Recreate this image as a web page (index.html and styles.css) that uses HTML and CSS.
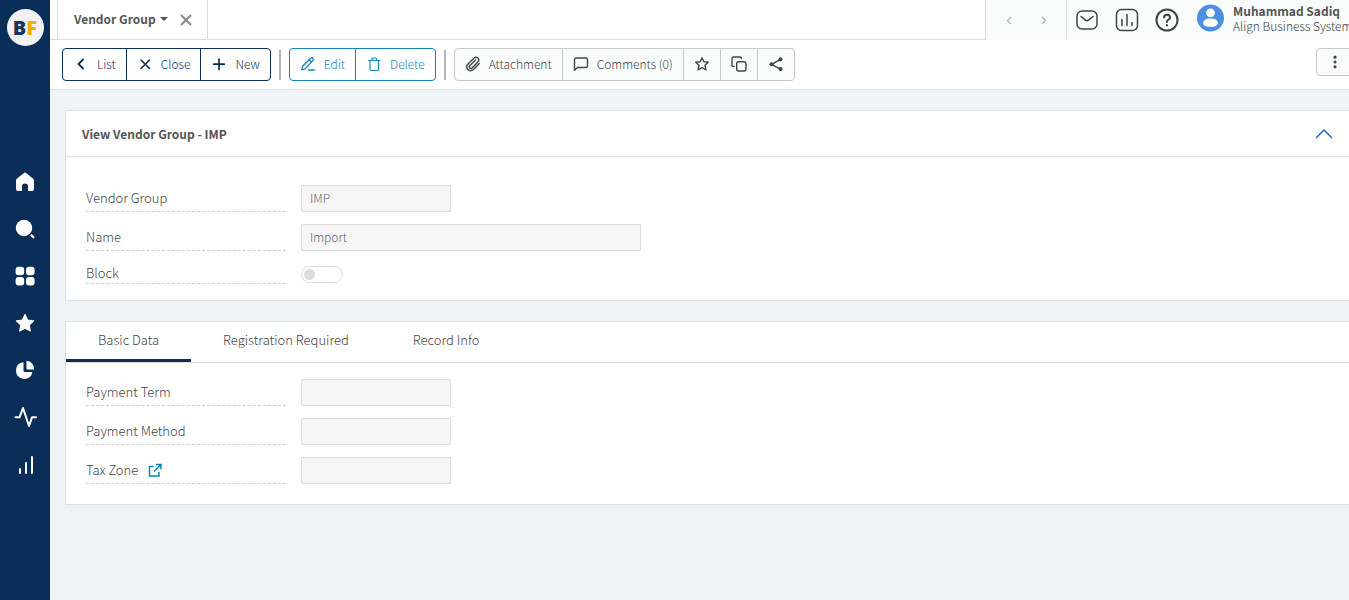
FILE: index.html
```html
<!DOCTYPE html>
<html lang="en">
<head>
<meta charset="utf-8">
<title>Vendor Group - IMP</title>
<link rel="stylesheet" href="styles.css">
</head>
<body>
<div class="app">
  <aside class="sidebar">
    <a class="logo" href="#" aria-label="Home page"><span class="logo-b">B</span><span class="logo-f">F</span></a>
    <nav class="side-nav" aria-label="Main">
      <a href="#" aria-label="Home"><svg viewBox="0 0 20 20"><path fill="currentColor" d="M9 1 2 6.400Q1 7.200 1 8.500V17q0 2 2 2h4v-5q0-2.500 3-2.500t3 2.500v5h4q2 0 2-2V8.500q0-1.300-1-2.100L11 1q-1-.8-2 0Z"/></svg></a>
      <a href="#" aria-label="Search"><svg viewBox="0 0 20 20"><circle cx="9" cy="9" r="8.200" fill="currentColor"/><path d="m16.500 16.500 1.800 1.700" stroke="currentColor" stroke-width="2.400" stroke-linecap="round"/></svg></a>
      <a href="#" aria-label="Apps"><svg viewBox="0 0 20 20" fill="currentColor"><rect x=".6" y=".8" width="8.600" height="8.400" rx="3"/><rect x="11" y=".8" width="8.600" height="8.400" rx="3"/><rect x=".6" y="11" width="8.600" height="8.400" rx="3"/><rect x="11" y="11" width="8.600" height="8.400" rx="3"/></svg></a>
      <a href="#" aria-label="Favourites"><svg viewBox="0 0 20 20"><path d="m10 1.500 2.600 5.500 6 .8-4.400 4.200 1.100 6L10 15.100 4.700 18l1.100-6L1.400 7.800l6-.8Z" fill="currentColor" stroke="currentColor" stroke-width="1.200" stroke-linejoin="round"/></svg></a>
      <a href="#" aria-label="Reports"><svg viewBox="0 0 20 20" fill="currentColor"><path d="M8.500 2.300Q1 3 1 10.500T9 19q7.500-.3 8.300-7H10q-1.500 0-1.500-1.500Z"/><path d="M11.500.8q7 .6 7.700 8.700h-6.500q-1.200 0-1.200-1.200Z"/></svg></a>
      <a href="#" aria-label="Activity"><svg viewBox="0 0 20 20"><path d="M.5 10.300h4L8 1l6 18 3-8.700h4" fill="none" stroke="currentColor" stroke-width="2" stroke-linejoin="round" stroke-linecap="round"/></svg></a>
      <a href="#" aria-label="Statistics"><svg viewBox="0 0 20 20"><path d="M5 19v-4M11 19V9M17 19V3" stroke="currentColor" stroke-width="2" stroke-linecap="round"/></svg></a>
    </nav>
  </aside>

  <div class="main">
    <header class="topbar">
      <div class="tab-strip">
        <div class="doc-tab">
          <button class="doc-name" type="button">Vendor Group <span class="caret"></span></button>
          <button class="doc-close" type="button" aria-label="Close tab"><svg viewBox="0 0 12 12"><path d="m1 1 10 10M11 1 1 11" stroke="currentColor" stroke-width="2"/></svg></button>
        </div>
      </div>
      <div class="pager">
        <button type="button" aria-label="Previous"><svg viewBox="0 0 10 10"><path d="M7 2 3.500 5.500 7 9" fill="none" stroke="currentColor" stroke-width="1.500"/></svg></button>
        <button type="button" aria-label="Next"><svg viewBox="0 0 10 10"><path d="M3 2 6.500 5.500 3 9" fill="none" stroke="currentColor" stroke-width="1.500"/></svg></button>
      </div>
      <div class="utilities">
        <button type="button" aria-label="Messages"><svg viewBox="0 0 24 24"><rect x="2" y="3" width="20" height="18" rx="5"/><path d="m6 8.500 4.500 3.700q1.500 1.200 3 0L18 8.500"/></svg></button>
        <button type="button" aria-label="Dashboard"><svg viewBox="0 0 24 24"><rect x="1.500" y="1.500" width="21" height="21" rx="5"/><path d="M7 17.500v-6M12 17.500v-11M17 17.500v-3"/></svg></button>
        <button type="button" aria-label="Help"><svg viewBox="0 0 24 24" class="help"><circle cx="12" cy="12" r="10.500"/><path d="M9 9.500Q9 6.700 12 6.700t3 2.700q0 1.500-1.500 2.300Q12 12.500 12 14M12 17v.500"/></svg></button>
      </div>
      <a class="account" href="#">
        <svg class="avatar" viewBox="0 0 26 26"><circle cx="13" cy="13" r="13" fill="#4d90e2"/><circle cx="13" cy="8" r="4.200" fill="#fff"/><path fill="#fff" d="M6 18q0-4.500 7-4.500t7 4.500q0 3.500-7 3.500T6 18Z"/></svg>
        <span class="account-text"><strong>Muhammad Sadiq</strong><span>Align Business System</span></span>
      </a>
    </header>

    <div class="toolbar">
      <div class="group group-navy">
        <button type="button"><svg viewBox="0 0 16 16"><path d="M10 3.500 5.500 8l4.500 4.500" stroke-width="1.800"/></svg>List</button>
        <button type="button"><svg viewBox="0 0 16 16"><path d="m4 4 8.500 8.500M12.500 4 4 12.500" stroke-width="1.600"/></svg>Close</button>
        <button type="button"><svg viewBox="0 0 16 16"><path d="M8 3v10.500M2.700 8.200h10.600" stroke-width="1.700"/></svg>New</button>
      </div>
      <span class="divider"></span>
      <div class="group group-blue">
        <button type="button"><svg viewBox="0 0 16 16"><path d="m1.800 14 .9-3.700L10.500 2.200q1.200-1 2.300 0t0 2.300L5.200 12.900ZM9.200 3.700l2.200 2.200M8.500 14h6" stroke-width="1.300"/></svg>Edit</button>
        <button type="button"><svg viewBox="0 0 16 16"><path d="M2.500 4.500h11.500M4 4.500V13q0 1.500 1.500 1.500H11q1.500 0 1.500-1.500V4.500M6 4.500V3q0-1 1-1h2.500q1 0 1 1v1.500" stroke-width="1.200"/></svg>Delete</button>
      </div>
      <span class="divider"></span>
      <div class="group group-grey">
        <button type="button"><svg viewBox="0 0 16 16"><path d="m14.300 7.500-6 6Q5.500 16 2.800 13.600.4 11 2.800 8.200L9 2q2-1.700 4 .1 1.700 1.900 0 3.700l-6 6.100q-1.100 1-2.200 0-1-1 0-2.200l5.600-5.600" stroke-width="1.400"/></svg>Attachment</button>
        <button type="button"><svg viewBox="0 0 16 16"><path d="M1.500 14.300V3.500Q1.500 2 3 2h10q1.500 0 1.500 1.500V10q0 1.500-1.500 1.500H4.500Z" stroke-width="1.400"/></svg>Comments (0)</button>
        <button type="button" class="icon-only" aria-label="Favourite"><svg viewBox="0 0 16 16"><path d="m8 1.800 1.800 4 4.500.5L11 9.300l1 4.500-4-2.300-4 2.300 1-4.500-3.300-3 4.500-.5Z" stroke-width="1.400"/></svg></button>
        <button type="button" class="icon-only" aria-label="Copy"><svg viewBox="0 0 16 16"><rect x="5.700" y="5.700" width="9.300" height="9.300" rx="2" stroke-width="1.400"/><path d="M3 10.500H2.500Q1 10.500 1 9V2.500Q1 1 2.500 1H9q1.500 0 1.500 1.500" stroke-width="1.400"/></svg></button>
        <button type="button" class="icon-only" aria-label="Share"><svg viewBox="0 0 16 16"><path d="M12.500 3.300 3.500 8.300l9 4.800" stroke-width="1.400"/><g fill="currentColor" stroke="none"><circle cx="12.500" cy="3.300" r="2"/><circle cx="3.500" cy="8.300" r="2"/><circle cx="12.500" cy="13.100" r="2"/></g></svg></button>
      </div>
      <button class="more" type="button" aria-label="More"><svg viewBox="0 0 16 16" fill="currentColor"><circle cx="8" cy="2.500" r="1.800"/><circle cx="8" cy="8" r="1.800"/><circle cx="8" cy="13.500" r="1.800"/></svg></button>
    </div>

    <main class="content">
      <section class="panel">
        <div class="panel-head">
          <h1>View Vendor Group - IMP</h1>
          <button type="button" aria-label="Collapse"><svg viewBox="0 0 16 10"><path d="m0 9 8-8 8 8" fill="none" stroke="currentColor" stroke-width="1.400"/></svg></button>
        </div>
        <form class="fields fields-main">
          <div class="row"><label for="group">Vendor Group</label><input class="text short" id="group" value="IMP" disabled></div>
          <div class="row"><label for="name">Name</label><input class="text long" id="name" value="Import" disabled></div>
          <div class="row row-switch"><label for="block">Block</label><input class="switch" id="block" type="checkbox" disabled></div>
        </form>
      </section>

      <section class="panel">
        <div class="tabs" role="tablist">
          <button type="button" role="tab" aria-selected="true" class="active">Basic Data</button>
          <button type="button" role="tab">Registration Required</button>
          <button type="button" role="tab">Record Info</button>
        </div>
        <form class="fields fields-tab">
          <div class="row"><label for="term">Payment Term</label><input class="text short" id="term" disabled></div>
          <div class="row"><label for="method">Payment Method</label><input class="text short" id="method" disabled></div>
          <div class="row"><label for="zone">Tax Zone <svg class="link-icon" viewBox="0 0 14 14"><path d="M5.500 3.500H1.500v9.500h9.500V9M8 1.500h5v5M13 1.500 6 8.500" fill="none" stroke="currentColor" stroke-width="1.400"/></svg></label><input class="text short" id="zone" disabled></div>
        </form>
      </section>
    </main>
  </div>
</div>
</body>
</html>
```
FILE: styles.css
```css
* { box-sizing: border-box; }

body {
  margin: 0;
  overflow: hidden;
  background: #eef3f7;
  color: #444;
  font: 300 13px/20px "Noto Sans CJK SC", "Noto Sans", sans-serif;
}

button {
  margin: 0;
  padding: 0;
  border: 0;
  background: none;
  color: inherit;
  font: inherit;
}

a { color: inherit; text-decoration: none; }
svg { display: block; flex: none; }

.app { display: flex; min-height: 100vh; }

/* Sidebar */
.sidebar {
  flex: none;
  width: 50px;
  padding-top: 9px;
  background: #0b2e59;
  color: #fff;
}
.logo {
  display: flex;
  align-items: center;
  justify-content: center;
  width: 37px;
  height: 37px;
  margin: 0 auto;
  border-radius: 50%;
  background: #f2f2f2;
  font: 900 20px/20px "Open Sans", sans-serif;
}
.logo-b { color: #1c355e; }
.logo-f { color: #f2ae00; }
.side-nav {
  display: flex;
  flex-direction: column;
  align-items: center;
  gap: 27px;
  padding-top: 126px;
}
.side-nav svg { width: 20px; height: 20px; overflow: visible; }

.main { flex: 1; min-width: 0; }

/* Top bar */
.topbar { display: flex; height: 40px; background: #fafcfc; }
.tab-strip {
  flex: 1;
  display: flex;
  padding-left: 7px;
  border-bottom: 1px solid #dcdcdc;
  background: #fff;
}
.doc-tab {
  display: flex;
  align-items: center;
  justify-content: space-between;
  width: 151px;
  padding: 0 15px 0 16px;
  border: solid #dcdcdc;
  border-width: 0 1px;
}
.doc-name { display: flex; align-items: center; gap: 4px; padding-bottom: 1px; color: #555; font-weight: 700; font-size: 12px; white-space: nowrap; }
.caret {
  border: 4px solid transparent;
  border-top-color: currentColor;
  border-bottom: 0;
}
.doc-close { color: #888; }
.doc-close svg { width: 12px; height: 12px; }
.pager {
  display: flex;
  align-items: center;
  justify-content: center;
  gap: 25px;
  width: 82px;
  border: solid #dcdcdc;
  border-width: 0 1px;
  color: #bbb;
}
.pager svg { width: 10px; height: 10px; }
.utilities { display: flex; align-items: center; gap: 16px; padding-left: 8px; }
.utilities svg { width: 24px; height: 24px; fill: none; stroke: #444; stroke-width: 1.5; stroke-linecap: round; }
.utilities .help { stroke-width: 2; }
.account { display: flex; gap: 9px; width: 170px; padding: 3px 0 0 18px; font-size: 12px; }
.avatar { width: 27px; height: 30px; }
.account-text { display: flex; flex-direction: column; line-height: 15px; white-space: nowrap; }
.account-text strong { color: #555; font-weight: 700; }

/* Toolbar */
.toolbar {
  display: flex;
  align-items: flex-start;
  gap: 8px;
  height: 50px;
  padding: 8px 0 0 12px;
  border-bottom: 1px solid #dcdfe2;
  background: #fff;
  font-size: 12px;
}
.group { display: flex; height: 33px; border: 1px solid; border-radius: 4px; }
.group button { display: flex; align-items: center; gap: 8px; padding: 0 10px 1px; white-space: nowrap; }
.group button + button { border-left: 1px solid; border-color: inherit; }
.group svg { width: 16px; height: 16px; fill: none; stroke: currentColor; stroke-linecap: round; stroke-linejoin: round; }
.group-navy { border-color: #0b2e59; color: #0b2e59; }
.group-blue { border-color: #1784b8; color: #1784b8; }
.group-grey { border-color: #c8c8c8; color: #444; background: #fafcfc; }
.divider { width: 2px; height: 30px; margin-top: 2px; background: #b5b5b5; }
.more {
  display: flex;
  align-items: center;
  justify-content: center;
  width: 38px;
  height: 28px;
  margin: 0 -5px 0 auto;
  border: 1px solid #c8c8c8;
  border-radius: 4px;
  background: #fafcfc;
}
.more svg { width: 14px; height: 14px; }

/* Panels */
.content { display: grid; gap: 20px; padding: 20px 0 20px 15px; }
.panel { border: 1px solid #dcdfe2; border-right: 0; background: #fff; }
.panel-head {
  display: flex;
  align-items: center;
  justify-content: space-between;
  height: 46px;
  padding: 0 17px 0 16px;
  border-bottom: 1px solid #dcdfe2;
}
.panel-head h1 { margin: 0; color: #555; font-size: 12px; font-weight: 700; }
.panel-head button { color: #0d63d6; }
.panel-head svg { width: 16px; height: 10px; }

.fields { display: grid; gap: 12px; }
.fields-main { padding: 28px 20px 16px; }
.fields-tab { padding: 16px 20px 20px; }
.row { display: flex; gap: 15px; height: 27px; }
.row label {
  display: flex;
  align-items: center;
  gap: 10px;
  width: 200px;
  border-bottom: 1px dashed #ccc;
}
.row-switch { height: 21px; }
.text {
  padding: 0 8px 1px;
  border: 1px solid #dcdcdc;
  border-radius: 2px 0 0 2px;
  background: #f6f6f6;
  color: #666;
  font: 300 12px/20px "Noto Sans CJK SC", "Noto Sans", sans-serif;
}
.short { width: 150px; }
.long { width: 340px; }
.switch {
  appearance: none;
  display: flex;
  align-items: center;
  width: 42px;
  height: 17px;
  margin: 3px 0 0;
  padding-left: 2px;
  border: 1px solid #dcdcdc;
  border-radius: 9px;
  background: #fff;
}
.switch::before { content: ""; width: 11px; height: 11px; border-radius: 50%; background: #dcdcdc; }
.link-icon { width: 14px; height: 14px; color: #0083be; }

/* Tabs */
.tabs { display: flex; height: 41px; border-bottom: 1px solid #dcdcdc; }
.tabs button { padding: 0 32px 2px; border-bottom: 3px solid transparent; }
.tabs .active { border-bottom-color: #0b2e59; }
```
